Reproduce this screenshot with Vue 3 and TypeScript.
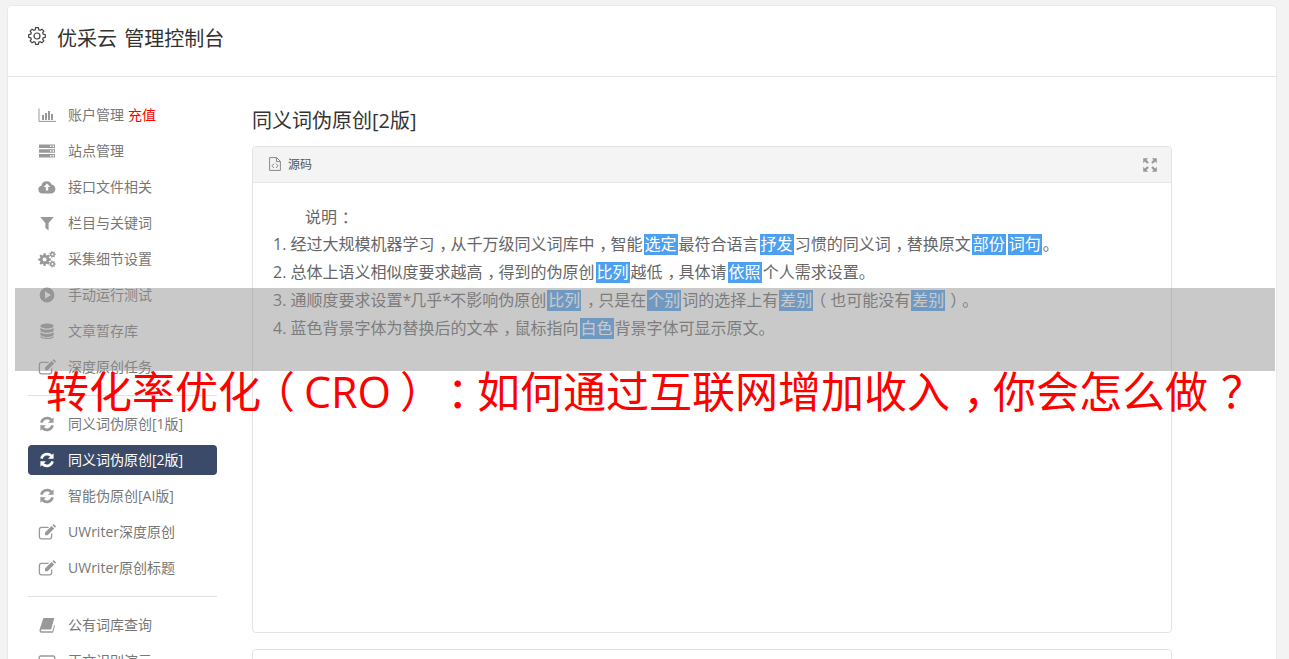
<script setup lang="ts">
interface NavItem {
  icon: string
  label: string
  extra?: string
  active?: boolean
}

// builds a cog outline, used by the header icon and the settings icon
const gear = (cx: number, cy: number, outer: number, inner: number, teeth: number) => {
  const pts: string[] = []
  const step = (Math.PI * 2) / teeth
  for (let i = 0; i < teeth; i++) {
    const a = i * step
    const at = (r: number, t: number) =>
      `${(cx + r * Math.cos(a + t * step)).toFixed(2)} ${(cy + r * Math.sin(a + t * step)).toFixed(2)}`
    pts.push(at(inner, -0.36), at(outer, -0.2), at(outer, 0.2), at(inner, 0.36))
  }
  return 'M' + pts.join('L') + 'Z'
}

const ring = (cx: number, cy: number, r: number) =>
  `M${cx - r} ${cy}a${r} ${r} 0 1 0 ${r * 2} 0a${r} ${r} 0 1 0 ${-r * 2} 0Z`

const refresh = {
  fill: 'M15.6 2.2v5.6h-5.6zM2.4 15.8v-5.6h5.6z',
  line: 'M3.4 7.6A5.9 5.9 0 0 1 13.4 5M14.6 10.4A5.9 5.9 0 0 1 4.6 13',
  sw: 2.6,
}
const edit = {
  fill: 'M7 9.6l6.6-6.6 2.6 2.6-6.6 6.6H7zM14.4 2.2l.7-.7c.3-.3.7-.3 1 0l1.6 1.6c.3.3.3.7 0 1l-.7.7z',
  line: 'M13.6 10.4v3.4a2 2 0 0 1-2 2H3.4a2 2 0 0 1-2-2V6.4a2 2 0 0 1 2-2h7.2',
  sw: 1.3,
}

const icons: Record<string, { fill?: string; line?: string; sw?: number }> = {
  chart: {
    fill: 'M4 9h2v5H4zM7 7h2v7H7zM10 5h2v9h-2zM13 8h2v6h-2z',
    line: 'M1 2.5V15.4H18',
    sw: 1,
  },
  server: {
    fill:
      'M1 2.5h16v3.6H1zM12 3.6v1.4h1.4V3.6zM14.6 3.6v1.4H16V3.6z' +
      'M1 7.2h16v3.6H1zM12 8.3v1.4h1.4V8.3zM14.6 8.3v1.4H16V8.3z' +
      'M1 11.9h16v3.6H1zM12 13v1.4h1.4V13zM14.6 13v1.4H16V13z',
  },
  cloud: {
    fill:
      'M4.4 15.4A3.9 3.9 0 0 1 3.4 7.7 5.4 5.4 0 0 1 13.6 6.4 4.6 4.6 0 0 1 13.8 15.4z' +
      'M9 5.6l-3.3 3.4h2.1v3.4h2.4V9h2.1z',
  },
  filter: { fill: 'M2.2 3h13.6L10.6 9v7.4l-3.2-2.4V9z' },
  cogs: {
    fill:
      gear(6.6, 9.6, 6.4, 4.7, 8) + ring(6.6, 9.6, 2) +
      gear(14.4, 4.4, 3.4, 2.4, 7) + ring(14.4, 4.4, 1) +
      gear(14.4, 14, 3.4, 2.4, 7) + ring(14.4, 14, 1),
  },
  play: { fill: ring(9, 9, 7.4) + 'M7 5.2v7.6l6-3.8z' },
  database: {
    fill:
      'M9 1.4c3.6 0 6.6 1.1 6.6 2.5S12.6 6.4 9 6.4 2.4 5.3 2.4 3.9 5.4 1.4 9 1.4z' +
      'M2.4 5.8C3.5 7 6 7.7 9 7.7s5.5-.7 6.6-1.9v2.5C15.6 9.7 12.6 10.8 9 10.8S2.4 9.7 2.4 8.3z' +
      'M2.4 10C3.5 11.2 6 11.9 9 11.9s5.5-.7 6.6-1.9v2.5C15.6 13.9 12.6 15 9 15s-6.6-1.1-6.6-2.5z' +
      'M2.4 13.9C3.5 15.1 6 15.8 9 15.8s5.5-.7 6.6-1.9v.8C15.6 16 12.6 17 9 17s-6.6-1-6.6-2.3z',
  },
  edit,
  refresh,
  book: {
    fill: 'M5.4 2h11l-.4 1.3-2.9 10.2H3.8c-.7 0-1 .4-.9 1 .1.5.5.8 1.1.8h10.4l1.8-6.4.8.8-2 7.1H3.7C2.5 16.8 1.5 16 1.5 14.5c0-.4 0-.7.1-1z',
  },
  box: { line: 'M2.8 4h12.4a1.6 1.6 0 0 1 1.6 1.6v8.8a1.6 1.6 0 0 1-1.6 1.6H2.8a1.6 1.6 0 0 1-1.6-1.6V5.6A1.6 1.6 0 0 1 2.8 4z', sw: 1.4 },
}

const groups: NavItem[][] = [
  [
    { icon: 'chart', label: '账户管理', extra: '充值' },
    { icon: 'server', label: '站点管理' },
    { icon: 'cloud', label: '接口文件相关' },
    { icon: 'filter', label: '栏目与关键词' },
    { icon: 'cogs', label: '采集细节设置' },
    { icon: 'play', label: '手动运行测试' },
    { icon: 'database', label: '文章暂存库' },
    { icon: 'edit', label: '深度原创任务' },
  ],
  [
    { icon: 'refresh', label: '同义词伪原创[1版]' },
    { icon: 'refresh', label: '同义词伪原创[2版]', active: true },
    { icon: 'refresh', label: '智能伪原创[AI版]' },
    { icon: 'edit', label: 'UWriter深度原创' },
    { icon: 'edit', label: 'UWriter原创标题' },
  ],
  [
    { icon: 'book', label: '公有词库查询' },
    { icon: 'box', label: '正文识别演示' },
  ],
]

const headGear = gear(9, 9, 8.4, 6.5, 8)
</script>

<template>
  <div class="page">
    <div class="card">
      <header class="head">
        <svg class="head-icon" width="18" height="18" viewBox="0 0 18 18">
          <path :d="headGear" />
          <circle cx="9" cy="9" r="3" />
        </svg>
        <span>优采云 管理控制台</span>
      </header>
      <div class="body">
        <aside class="side">
          <template v-for="(group, g) in groups" :key="g">
            <hr v-if="g > 0" class="sep" />
            <a v-for="item in group" :key="item.label" class="nav" :class="{ active: item.active }">
              <svg class="nav-icon" width="18" height="18" viewBox="0 0 18 18">
                <path v-if="icons[item.icon].fill" class="f" fill-rule="evenodd" :d="icons[item.icon].fill" />
                <path
                  v-if="icons[item.icon].line"
                  class="s"
                  :stroke-width="icons[item.icon].sw"
                  :d="icons[item.icon].line"
                />
              </svg>
              <span>{{ item.label }}</span>
              <em v-if="item.extra">{{ item.extra }}</em>
            </a>
          </template>
        </aside>
        <main class="main">
          <h3 class="title">同义词伪原创[2版]</h3>
          <section class="editor">
            <div class="bar">
              <button class="src">
                <svg width="12" height="14" viewBox="0 0 12 14">
                  <path class="doc" d="M.6.6h7l3.8 3.8v9H.6zM7.4.6v4h4" />
                  <path class="doc" d="M5 6.6 3 8.8l2 2.2M7 6.6l2 2.2-2 2.2" />
                </svg>
                <span>源码</span>
              </button>
              <svg class="full" width="14" height="14" viewBox="0 0 14 14">
                <path d="M.2.2h5L3.5 1.9l2.3 2.3-1.6 1.6-2.3-2.3L.2 5.2zM13.8.2v5l-1.7-1.7-2.3 2.3-1.6-1.6 2.3-2.3L8.8.2zM.2 13.8v-5l1.7 1.7 2.3-2.3 1.6 1.6-2.3 2.3 1.7 1.7zM13.8 13.8h-5l1.7-1.7-2.3-2.3 1.6-1.6 2.3 2.3 1.7-1.7z" />
              </svg>
            </div>
            <div class="text">
              <p class="lead">说明<i>：</i></p>
              <p>1. 经过大规模机器学习<i>，</i>从千万级同义词库中<i>，</i>智能<b>选定</b>最符合语言<b>抒发</b>习惯的同义词<i>，</i>替换原文<b>部份</b><b>词句</b>。</p>
              <p>2. 总体上语义相似度要求越高<i>，</i>得到的伪原创<b>比列</b>越低<i>，</i>具体请<b>依照</b>个人需求设置。</p>
              <p>3. 通顺度要求设置<u>*</u>几乎<u>*</u>不影响伪原创<b>比列</b><i>，</i>只是在<b>个别</b>词的选择上有<b>差别</b><s>（</s>也可能没有<b>差别</b><s>）</s>。</p>
              <p>4. 蓝色背景字体为替换后的文本<i>，</i>鼠标指向<b>白色</b>背景字体可显示原文。</p>
            </div>
          </section>
          <section class="editor next"></section>
        </main>
      </div>
    </div>
    <div class="band"></div>
    <div class="banner">转化率优化<s class="open">（</s>CRO<s class="close">）</s><i>：</i>如何通过互联网增加收入<i>，</i>你会怎么做<i>？</i></div>
  </div>
</template>

<style scoped>
.page {
  position: relative;
  height: 659px;
  overflow: hidden;
  box-sizing: border-box;
  padding: 6px 13px 0 8px;
  background: #f3f3f3;
  font-family: "Open Sans", "Noto Sans CJK SC", sans-serif;
  color: #676a6c;
  text-spacing-trim: space-all;
}
/* full width marks sit mid-cell in the original font */
.page i {
  display: inline-block;
  font-style: normal;
  transform: translateX(0.3em);
}
.page s {
  display: inline-block;
  text-decoration: none;
}
.card {
  height: 700px;
  background: #fff;
  border-radius: 4px;
  box-shadow: 0 0 0 1px #e9e9e9;
}
.head {
  display: flex;
  align-items: center;
  height: 71px;
  padding: 0 0 8px 20px;
  border-bottom: 1px solid #e5e5e5;
  font-size: 20px;
  word-spacing: 2px;
  color: #333;
  box-sizing: border-box;
}
.head-icon {
  margin-right: 11px;
  margin-top: -3px;
  fill: none;
  stroke: #444;
  stroke-width: 1.2;
}
.body {
  display: flex;
}
.side {
  display: flex;
  flex-direction: column;
  width: 189px;
  margin-left: 20px;
  padding-top: 20px;
}
.nav {
  display: flex;
  align-items: center;
  flex: none;
  height: 30px;
  margin: 3px 0;
  padding-left: 10px;
  border-radius: 4px;
  font-size: 14px;
  color: #777;
}
.nav span,
.nav em {
  margin-top: -2px;
}
.nav em {
  margin-left: 4px;
  font-style: normal;
  color: #f00;
}
.nav-icon {
  flex: none;
  margin-right: 12px;
  color: #999;
}
.nav-icon .f {
  fill: currentColor;
}
.nav-icon .s {
  fill: none;
  stroke: currentColor;
}
.nav.active {
  background: #3a4a68;
  color: #fff;
}
.nav.active .nav-icon {
  color: #fff;
}
.sep {
  flex: none;
  width: 100%;
  height: 1px;
  margin: 10px 0;
  border: 0;
  background: #e0e0e0;
}
.main {
  width: 920px;
  margin-left: 35px;
  padding-top: 29px;
}
.title {
  margin: 0 0 10px;
  font-size: 20px;
  font-weight: 400;
  line-height: 30px;
  color: #333;
}
.editor {
  box-sizing: border-box;
  height: 487px;
  border: 1px solid #e3e3e3;
  border-radius: 4px;
}
.editor.next {
  margin-top: 16px;
  height: 60px;
}
.bar {
  display: flex;
  align-items: center;
  justify-content: space-between;
  height: 35px;
  padding: 0 14px 0 16px;
  background: #f4f4f4;
  border-bottom: 1px solid #e6e6e6;
  border-radius: 4px 4px 0 0;
}
.src {
  display: flex;
  align-items: center;
  gap: 7px;
  padding: 0 0 2px;
  border: 0;
  background: none;
  font: inherit;
  font-size: 12px;
  color: #555;
}
.doc {
  fill: none;
  stroke: #888;
  stroke-width: 1;
}
.full {
  fill: #999;
}
.text {
  padding: 20px 20px 0;
  font-size: 16px;
  line-height: 28px;
  color: #666;
}
.text p {
  height: 28px;
  margin: 0;
}
.text .lead {
  height: 27px;
  padding-left: 32px;
}
.text u {
  letter-spacing: -1px;
  text-decoration: none;
}
.text s {
  transform: translateX(-4px);
}
.text s:last-of-type {
  transform: translateX(4px);
}
.text b {
  display: inline-block;
  margin: 0 1px;
  padding: 0 1px;
  line-height: 21px;
  font-weight: 400;
  color: #fff;
  background: #4d9ff0;
}
.band {
  position: absolute;
  left: 15px;
  top: 288px;
  width: 1260px;
  height: 83px;
  background: rgba(147, 147, 147, 0.5);
}
.banner {
  position: absolute;
  left: 46px;
  top: 361px;
  white-space: nowrap;
  font-size: 43px;
  line-height: 62px;
  color: #f00;
}
.banner .open {
  transform: translateX(-9px);
}
.banner .close {
  transform: translateX(9px);
}
</style>

<style>
html,
body {
  overflow: hidden;
}
</style>
